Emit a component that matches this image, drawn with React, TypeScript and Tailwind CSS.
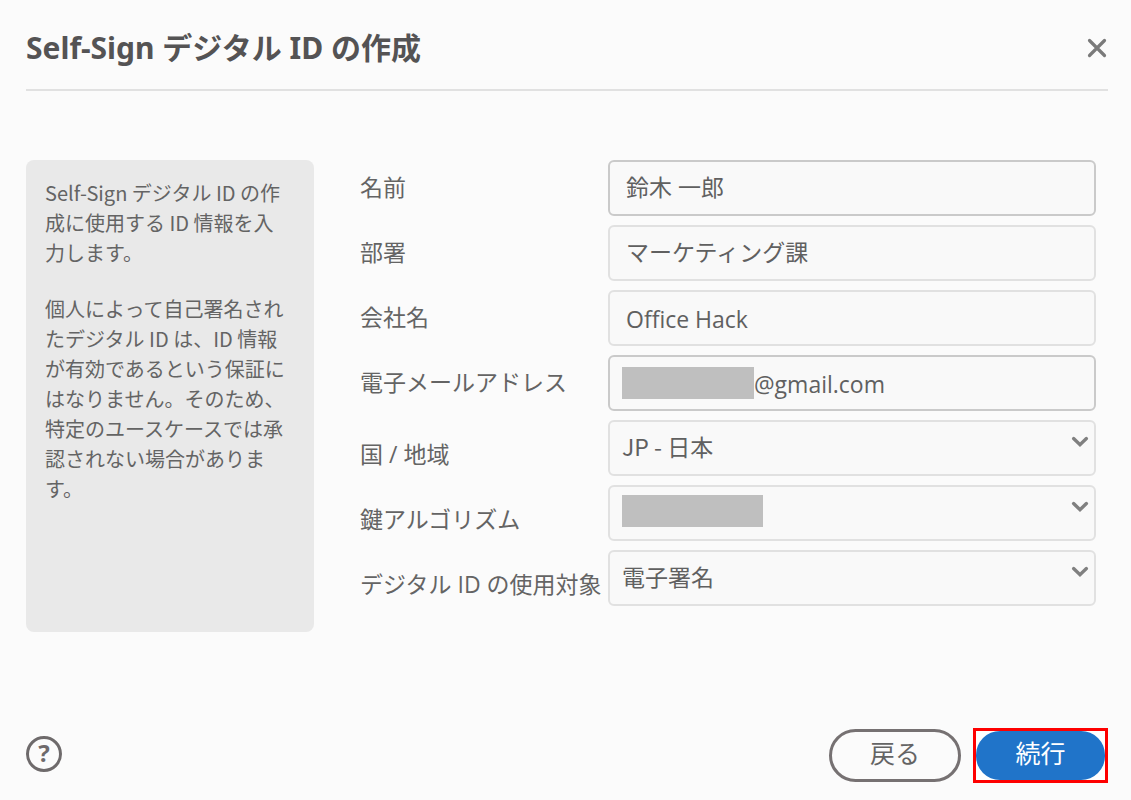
import type { ReactNode } from "react";

const fieldBox =
  "flex h-14 w-full items-center rounded-md border-2 bg-[#f9f9f9] pr-3 focus-within:border-[#2074c9]";
const inputText = "h-full min-w-0 flex-1 bg-transparent text-[#606060] outline-none";

function Row({ id, label, low, children }: { id: string; label: string; low?: boolean; children: ReactNode }) {
  return (
    <div className="grid grid-cols-[248px_1fr] items-center">
      <label htmlFor={id} className={low ? "pt-3 whitespace-nowrap" : "pb-0.5 whitespace-nowrap"}>
        {label}
      </label>
      {children}
    </div>
  );
}

type TextFieldProps = {
  id: string;
  label: string;
  value: string;
  strong?: boolean;
  latin?: boolean;
  masked?: boolean;
};

function TextField({ id, label, value, strong, latin, masked }: TextFieldProps) {
  return (
    <Row id={id} label={label}>
      <div className={`${fieldBox} ${strong ? "border-[#cacaca]" : "border-[#e1e1e1]"} ${masked ? "pl-3" : "pl-4"}`}>
        {masked && <span className="h-8 w-[132px] shrink-0 bg-[#bfbfbf]" />}
        <input id={id} type="text" defaultValue={value} className={`${inputText} ${latin ? "pt-0.5" : "pb-1"}`} />
      </div>
    </Row>
  );
}

function SelectField({ id, label, options, masked }: { id: string; label: string; options: string[]; masked?: boolean }) {
  return (
    <Row id={id} label={label} low>
      <div className="relative">
        <select
          id={id}
          className="block h-14 w-full appearance-none rounded-md border-2 border-[#e1e1e1] bg-[#f9f9f9] pr-12 pb-1 pl-3 font-['Noto_Sans_CJK_JP',sans-serif] text-[#606060] outline-none focus:border-[#2074c9]"
        >
          {options.map((o) => (
            <option key={o}>{o}</option>
          ))}
        </select>
        {masked && <span className="pointer-events-none absolute top-2.5 left-3.5 h-8 w-[141px] bg-[#bfbfbf]" />}
        <svg
          viewBox="0 0 18 12"
          className="pointer-events-none absolute top-4 right-[7px] h-3 w-[18px]"
          fill="none"
          stroke="#808080"
          strokeWidth="3.4"
          strokeLinecap="round"
          strokeLinejoin="miter"
          aria-hidden="true"
        >
          <path d="M2.6 2.6 9 8.7l6.4-6.1" />
        </svg>
      </div>
    </Row>
  );
}

export default function App() {
  return (
    <main
      lang="ja"
      className="flex min-h-screen flex-col bg-[#fbfbfb] pr-[23px] pb-[17px] pl-[26px] font-['Open_Sans','Noto_Sans_CJK_JP',sans-serif] text-[#646464]"
    >
      <header className="flex h-[91px] items-center justify-between border-b-2 border-[#e1e1e1] pt-1.5">
        <h1 className="font-['Noto_Sans','Noto_Sans_CJK_JP',sans-serif] text-[30px] leading-10 font-bold text-[#545354]">
          Self-Sign デジタル ID の作成
        </h1>
        <button type="button" aria-label="閉じる" className="flex size-[22px] items-center justify-center">
          <svg viewBox="0 0 20 20" className="size-5" fill="none" stroke="#7a7a7a" strokeWidth="3.2" strokeLinecap="round" aria-hidden="true">
            <path d="M2.5 2.5l15 15M17.5 2.5l-15 15" />
          </svg>
        </button>
      </header>

      <div className="flex flex-1 items-start gap-[46px] pt-[69px] pr-3">
        <aside className="min-h-[472px] w-[288px] shrink-0 rounded-lg bg-[#e9e9e9] pt-[18px] pr-7 pl-[19px] font-['Noto_Sans_CJK_JP',sans-serif] text-[20px] leading-[30px]">
          <p>Self-Sign デジタル ID の作成に使用する ID 情報を入力します。</p>
          <p className="mt-[26px]">
            個人によって自己署名されたデジタル ID は、ID 情報が有効であるという保証にはなりません。そのため、特定のユースケースでは承認されない場合があります。
          </p>
        </aside>

        <form id="identity" className="flex min-w-0 flex-1 flex-col gap-[9px] text-[23px] leading-8">
          <TextField id="name" label="名前" value="鈴木 一郎" strong />
          <TextField id="unit" label="部署" value="マーケティング課" />
          <TextField id="company" label="会社名" value="Office Hack" latin />
          <TextField id="email" label="電子メールアドレス" value="@gmail.com" strong latin masked />
          <SelectField id="country" label="国 / 地域" options={["JP - 日本"]} />
          <SelectField id="algorithm" label="鍵アルゴリズム" options={[""]} masked />
          <SelectField id="usage" label="デジタル ID の使用対象" options={["電子署名"]} />
        </form>
      </div>

      <footer className="flex items-center justify-between">
        <button
          type="button"
          aria-label="ヘルプ"
          className="mb-1 flex size-9 items-center justify-center rounded-full border-3 border-[#6e6a6b] pb-0.5 font-['Noto_Sans',sans-serif] text-[24px] leading-none font-bold text-[#6e6a6b]"
        >
          ?
        </button>
        <div className="flex items-center gap-3 text-[25px]">
          <button type="button" className="flex h-[53px] w-[132px] items-center justify-center rounded-full border-3 border-[#767172] pb-1">
            戻る
          </button>
          <div className="border-3 border-[#fe0000] bg-white">
            <button
              type="submit"
              form="identity"
              className="flex h-[49px] w-[129px] items-center justify-center rounded-3xl bg-[#2074c9] pb-1 text-white"
            >
              続行
            </button>
          </div>
        </div>
      </footer>
    </main>
  );
}
